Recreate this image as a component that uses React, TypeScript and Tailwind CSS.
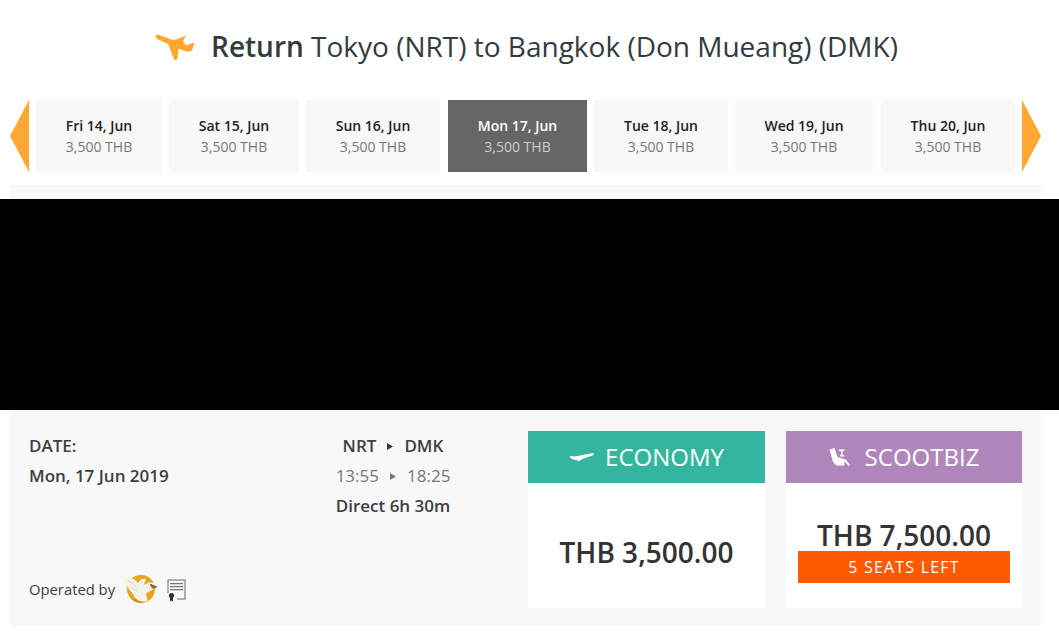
import { ReactNode } from "react";

type DateTab = { label: string; width: string; active?: boolean; extra?: string };

const tabs: DateTab[] = [
  { label: "Fri 14, Jun", width: "w-[126px]" },
  { label: "Sat 15, Jun", width: "w-[130px]" },
  { label: "Sun 16, Jun", width: "w-[134px]" },
  { label: "Mon 17, Jun", width: "w-[139px]", active: true, extra: "ml-[1px]" },
  { label: "Tue 18, Jun", width: "w-[134px]" },
  { label: "Wed 19, Jun", width: "w-[138px]" },
  { label: "Thu 20, Jun", width: "w-[134px]", extra: "ml-[1px]" },
];

const PlaneIcon = () => (
  <svg width="41" height="28" viewBox="0 0 41 28" className="shrink-0 mt-[1px]">
    <path
      d="M0.5 3.5C0.5 1.5 3 1.5 5 2.2L17 6.8L21 6.5L31 2.5L28 8L31 12.5L36 10.5L39.5 9.5L37 17.5C36 18.8 33 18.8 30 18L23.5 15.5L22.5 26L19.5 27.5L13 11L4.5 7C2 6 0.5 5 0.5 3.5Z"
      fill="#ffa733"
    />
  </svg>
);

const SmallPlane = () => (
  <svg width="25" height="9" viewBox="0 0 25 9">
    <path
      d="M0.5 3.5L3 3L5 3.6L10 2.8L16 1.6L22 0.4C24 0 25 0.3 25 1.2C24.5 2.2 22 3 19 4L13 6.2L10 8L7.5 8.2L9 6.6C6 7.2 2 6.6 0.5 3.5Z"
      fill="#fff"
    />
  </svg>
);

const SeatIcon = () => (
  <svg width="22" height="18" viewBox="0 0 22 18">
    <path d="M0.5 1.5L5.5 0L8.5 9L16 11.5L15 17.5L7.5 17.5L4 14Z" fill="#fff" />
    <path d="M10 1.5H15.5V3H13.5V7H15V8.5H11V7H12V3H10Z" fill="#fff" />
    <path d="M16.5 11L21 17L19.5 18L15.5 13Z" fill="#fff" />
  </svg>
);

const TigerLogo = () => (
  <svg width="33" height="30" viewBox="0 0 33 30" className="shrink-0">
    <circle cx="16" cy="15" r="14" fill="#eba51f" />
    <path d="M6 24C9 28 14 29.5 19 29C14 27 9 26 6 24Z" fill="#c98a14" />
    <path
      d="M0 5C4 2 9 4 13 9C15 6 18 3.5 21 5.5L18.5 11.5C21 9 26 7 30 10L31 14L25 17L21 19.5L22.5 27C15 29 10 25 8 20C4 16 1 10 0 5Z"
      fill="#f5f2ea"
    />
    <path d="M3 7C6 8 9 10 11 13M6 13C8 14 10 15 12 17" stroke="#d9cfb8" strokeWidth="1" fill="none" />
    <path d="M27 10.5L32.5 12.5L29 15L26 13.5Z" fill="#8a6a2a" />
    <circle cx="26" cy="11" r="0.9" fill="#333" />
  </svg>
);

const CertIcon = () => (
  <svg width="19" height="23" viewBox="0 0 19 23" className="shrink-0 mt-[3px]">
    <path d="M0.5 0.5H18.5V20.5H10V19.5H17.5V1.5H1.5V14H0.5Z" fill="#666" />
    <path d="M3 4H16V5.2H3ZM3 7H16V8.2H3ZM3 10H16V11.2H3Z" fill="#777" />
    <circle cx="4.5" cy="16.5" r="2.6" fill="#333" />
    <path d="M3 18.5H6V22.5L4.5 21.5L3 22.5Z" fill="#333" />
  </svg>
);

const Triangle = ({ dir }: { dir: "left" | "right" }) => (
  <svg width="19" height="72" viewBox="0 0 19 72" className="shrink-0">
    <path d={dir === "left" ? "M19 0V72L0 36Z" : "M0 0V72L19 36Z"} fill="#ffa733" />
  </svg>
);

const Caret = ({ color }: { color: string }) => (
  <svg width="6" height="7" viewBox="0 0 6 7">
    <path d="M0 0L6 3.5L0 7Z" fill={color} />
  </svg>
);

const FareCard = ({
  header,
  headerClass,
  children,
  width,
}: {
  header: ReactNode;
  headerClass: string;
  children: ReactNode;
  width: string;
}) => (
  <div className={`${width} flex flex-col bg-white`}>
    <div className={`h-[52px] flex items-center justify-center text-[24px] text-white ${headerClass}`}>
      {header}
    </div>
    {children}
  </div>
);

export default function App() {
  return (
    <div className="w-[1059px] h-[635px] overflow-hidden bg-white font-['Open_Sans',sans-serif] text-[#333]">
      <div className="h-[100px] flex items-start justify-center pt-[28px] pr-[6px]">
        <div className="flex items-center gap-[15px] h-[36px] text-[28px] text-[#333a42]">
          <PlaneIcon />
          <h1 className="whitespace-nowrap leading-[36px]">
            <span className="font-semibold">Return</span> Tokyo (NRT) to Bangkok (Don Mueang) (DMK)
          </h1>
        </div>
      </div>

      <div className="flex h-[72px] ml-[10px] mr-[18px] justify-between">
        <Triangle dir="left" />
        <div className="flex gap-[7px]">
          {tabs.map((t) => (
            <div
              key={t.label}
              className={`${t.width} ${t.extra ?? ""} flex flex-col items-center justify-center ${
                t.active ? "bg-[#666666] text-white" : "bg-[#f8f8f8] text-[#222]"
              }`}
            >
              <div className="text-[14px] font-semibold leading-[21px] whitespace-nowrap">{t.label}</div>
              <div
                className={`text-[14px] leading-[21px] whitespace-nowrap ${
                  t.active ? "text-[#cccccc]" : "text-[#777]"
                }`}
              >
                3,500 THB
              </div>
            </div>
          ))}
        </div>
        <Triangle dir="right" />
      </div>

      <div className="h-[14px] mt-[13px] ml-[10px] mr-[18px] bg-[#f8f8f8]" />
      <div className="h-[211px] bg-black" />

      <div className="ml-[10px] mr-[18px] h-[216px] bg-[#f8f8f8] flex pl-[19px] pr-[19px] pt-[21px] pb-[18px]">
        <div className="w-[291px] flex flex-col justify-between text-[17px] font-semibold text-[#3a3f45]">
          <div>
            <div className="leading-[30px]">DATE:</div>
            <div className="leading-[30px]">Mon, 17 Jun 2019</div>
          </div>
          <div className="flex items-center text-[14.8px] h-[34px] mb-[2px] font-medium">
            <span>Operated by</span>
            <span className="ml-[10px] flex">
              <TigerLogo />
            </span>
            <span className="ml-[9px] flex">
              <CertIcon />
            </span>
          </div>
        </div>

        <div className="w-[146px] text-[17px] font-semibold text-center text-[#3a3f45]">
          <div className="leading-[30px] flex items-center justify-center gap-[11px]">
            <span>NRT</span>
            <Caret color="#333a42" />
            <span>DMK</span>
          </div>
          <div className="leading-[30px] flex items-center justify-center gap-[11px] font-normal text-[#777]">
            <span>13:55</span>
            <Caret color="#777" />
            <span>18:25</span>
          </div>
          <div className="leading-[30px] whitespace-nowrap">Direct 6h 30m</div>
        </div>

        <div className="flex gap-[21px] ml-[62px]">
          <FareCard
            width="w-[237px]"
            headerClass="bg-[#33b69d]"
            header={
              <span className="flex items-center gap-[11px]">
                <SmallPlane />
                ECONOMY
              </span>
            }
          >
            <div className="flex-1 flex items-center justify-center pt-[13px] text-[28px] font-semibold text-[#333]">
              THB 3,500.00
            </div>
          </FareCard>
          <FareCard
            width="w-[236px]"
            headerClass="bg-[#b087bd]"
            header={
              <span className="flex items-center gap-[14px]">
                <SeatIcon />
                SCOOTBIZ
              </span>
            }
          >
            <div className="flex-1 flex flex-col items-center pt-[37px]">
              <div className="text-[28px] font-semibold leading-[31px] text-[#333]">THB 7,500.00</div>
              <div className="w-[212px] h-[32px] bg-[#ff5a00] text-white flex items-center justify-center text-[16px] tracking-[1.2px]">
                5 SEATS LEFT
              </div>
            </div>
          </FareCard>
        </div>
      </div>
    </div>
  );
}
